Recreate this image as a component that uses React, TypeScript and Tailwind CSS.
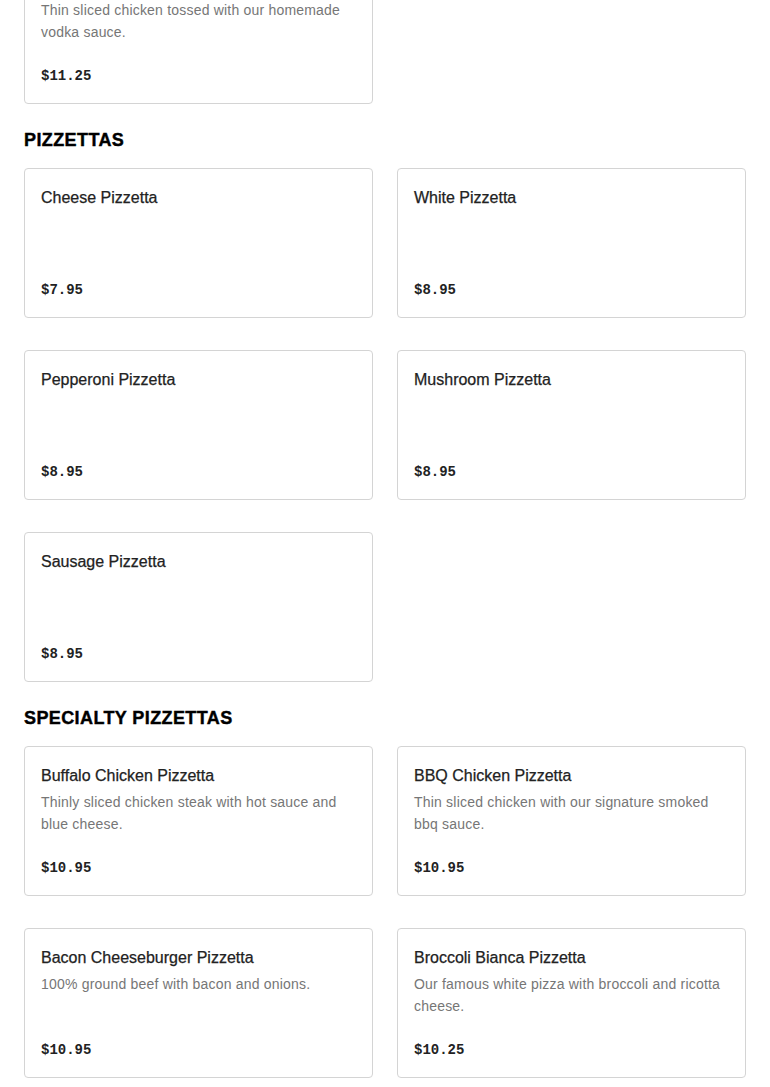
type Item = { name: string; desc?: string; price: string };

const sections: { title?: string; items: Item[] }[] = [
  {
    items: [
      {
        name: 'Chicken Vodka Pizzetta',
        desc: 'Thin sliced chicken tossed with our homemade vodka sauce.',
        price: '$11.25',
      },
    ],
  },
  {
    title: 'PIZZETTAS',
    items: [
      { name: 'Cheese Pizzetta', price: '$7.95' },
      { name: 'White Pizzetta', price: '$8.95' },
      { name: 'Pepperoni Pizzetta', price: '$8.95' },
      { name: 'Mushroom Pizzetta', price: '$8.95' },
      { name: 'Sausage Pizzetta', price: '$8.95' },
    ],
  },
  {
    title: 'SPECIALTY PIZZETTAS',
    items: [
      {
        name: 'Buffalo Chicken Pizzetta',
        desc: 'Thinly sliced chicken steak with hot sauce and blue cheese.',
        price: '$10.95',
      },
      {
        name: 'BBQ Chicken Pizzetta',
        desc: 'Thin sliced chicken with our signature smoked bbq sauce.',
        price: '$10.95',
      },
      {
        name: 'Bacon Cheeseburger Pizzetta',
        desc: '100% ground beef with bacon and onions.',
        price: '$10.95',
      },
      {
        name: 'Broccoli Bianca Pizzetta',
        desc: 'Our famous white pizza with broccoli and ricotta cheese.',
        price: '$10.25',
      },
    ],
  },
];

function MenuCard({ item }: { item: Item }) {
  return (
    <div className="h-[150px] flex flex-col justify-between bg-white border border-[#d4d4d4] rounded px-4 pt-[17px] pb-[17px]">
      <div>
        <div className="text-[16px] leading-6 text-[#222] font-['Liberation_Sans',Arial,sans-serif] [-webkit-text-stroke:0.25px_#222]">
          {item.name}
        </div>
        {item.desc && (
          <p className="mt-[3px] text-[14px] leading-[22px] tracking-[0.2px] text-[#767676] font-['Liberation_Sans',Arial,sans-serif]">
            {item.desc}
          </p>
        )}
      </div>
      <div className="text-[14px] leading-5 font-bold text-[#222] font-['Liberation_Mono','Courier_New',monospace]">
        {item.price}
      </div>
    </div>
  );
}

export default function App() {
  return (
    <div className="w-full min-h-screen bg-white overflow-hidden">
      <div className="px-6 -mt-[46px] pb-10">
        {sections.map((section, i) => (
          <div key={i}>
            {section.title && (
              <h2 className="mt-[22px] mb-[14px] text-[18px] leading-7 font-bold text-black tracking-[0.4px] [-webkit-text-stroke:0.4px_#000] font-['Liberation_Sans',Arial,sans-serif]">
                {section.title}
              </h2>
            )}
            <div className="grid grid-cols-2 gap-x-6 gap-y-8">
              {section.items.map((item) => (
                <MenuCard key={item.name} item={item} />
              ))}
            </div>
          </div>
        ))}
      </div>
    </div>
  );
}
